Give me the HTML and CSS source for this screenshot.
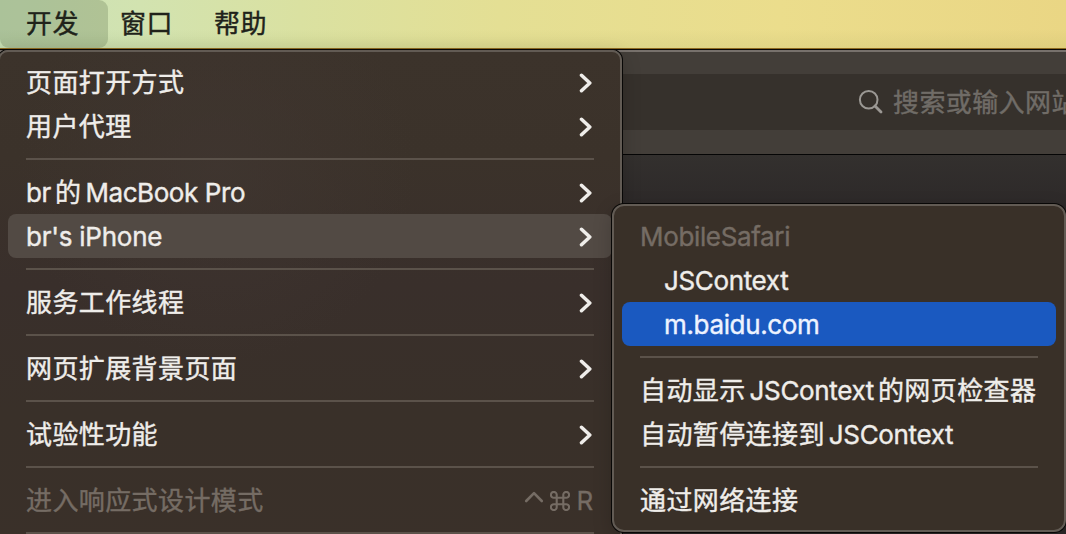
FILE: index.html
```html
<!DOCTYPE html>
<html lang="zh-CN">
<head>
<meta charset="utf-8">
<title>开发</title>
<link rel="stylesheet" href="styles.css">
</head>
<body>
<svg class="defs" width="0" height="0">
  <symbol id="chevron" viewBox="0 0 14 20"><path d="M2.5 2.3L10.8 10L2.5 17.7" fill="none" stroke="currentColor" stroke-width="3.5" stroke-linecap="round" stroke-linejoin="round"/></symbol>
</svg>
<div class="screen">
  <nav class="menubar">
    <span class="menubar-item active">开发</span>
    <span class="menubar-item window">窗口</span>
    <span class="menubar-item help">帮助</span>
  </nav>
  <main class="browser">
    <div class="toolbar">
      <div class="address">
        <svg class="search" width="26" height="26" viewBox="0 0 26 26" fill="none" stroke="#9b9894"><circle cx="10.7" cy="10.7" r="8.8" stroke-width="2"/><path d="M17 17L23 23" stroke-width="2.8" stroke-linecap="round"/></svg>
        <span class="placeholder">搜索或输入网站</span>
      </div>
    </div>
    <div class="page"></div>
  </main>

  <div class="menu main-menu">
    <div class="item"><span class="cjk">页面打开方式</span><svg class="chevron"><use href="#chevron"/></svg></div>
    <div class="item"><span class="cjk">用户代理</span><svg class="chevron"><use href="#chevron"/></svg></div>
    <div class="separator"></div>
    <div class="item"><span><span class="latin br">br</span>的<span class="latin mac">MacBook Pro</span></span><svg class="chevron"><use href="#chevron"/></svg></div>
    <div class="item open"><span class="latin phone">br's iPhone</span><svg class="chevron"><use href="#chevron"/></svg></div>
    <div class="separator"></div>
    <div class="item"><span class="cjk">服务工作线程</span><svg class="chevron"><use href="#chevron"/></svg></div>
    <div class="separator"></div>
    <div class="item"><span class="cjk">网页扩展背景页面</span><svg class="chevron"><use href="#chevron"/></svg></div>
    <div class="separator"></div>
    <div class="item"><span class="cjk">试验性功能</span><svg class="chevron"><use href="#chevron"/></svg></div>
    <div class="separator"></div>
    <div class="item disabled"><span class="cjk">进入响应式设计模式</span>
      <span class="shortcut">
        <svg width="20" height="24" viewBox="0 0 20 24"><path d="M2.2 13L10 5.2L17.8 13" fill="none" stroke="currentColor" stroke-width="2.6" stroke-linecap="round" stroke-linejoin="round"/></svg>
        <svg class="command" width="20" height="20" viewBox="0 0 20 20"><path d="M6.7 6.7H13.3V13.3H6.7ZM6.7 6.7V4A2.9 2.9 0 1 0 3.9 6.7H6.7M13.3 6.7H16.1A2.9 2.9 0 1 0 13.3 4V6.7M13.3 13.3V16A2.9 2.9 0 1 0 16.1 13.3H13.3M6.7 13.3H3.9A2.9 2.9 0 1 0 6.7 16V13.3" fill="none" stroke="currentColor" stroke-width="2.1"/></svg>
        <span class="latin key">R</span>
      </span>
    </div>
    <div class="separator"></div>
  </div>

  <div class="menu submenu">
    <div class="item disabled"><span class="latin safari">MobileSafari</span></div>
    <div class="item indent"><span class="latin context">JSContext</span></div>
    <div class="item indent selected"><span class="latin baidu">m.baidu.com</span></div>
    <div class="separator"></div>
    <div class="item"><span>自动显示<span class="latin context inline">JSContext</span>的网页检查器</span></div>
    <div class="item"><span>自动暂停连接到<span class="latin context inline">JSContext</span></span></div>
    <div class="separator"></div>
    <div class="item"><span class="cjk">通过网络连接</span></div>
  </div>
</div>
</body>
</html>
```
FILE: styles.css
```css
* { box-sizing: border-box; }
body { margin: 0; background: #302c2a; font-family: "Noto Sans CJK SC", sans-serif; font-size: 26px; letter-spacing: 0.4px; -webkit-text-stroke: 0.4px currentColor; }
.defs { display: block; }
.screen { position: relative; display: flex; flex-direction: column; width: 1066px; height: 534px; overflow: hidden; }
.menubar { display: flex; height: 49px; flex: none; color: #20221a; border-bottom: 1px solid #8e6b20;
  background: linear-gradient(180deg, rgba(60,80,20,0) 60%, rgba(60,80,20,.06) 100%), linear-gradient(90deg, #cae1b7 0, #d2e3b0 140px, #dae1a1 300px, #e4df94 500px, #ebdd8c 780px, #ead684 1066px); }
.menubar-item { height: 48px; line-height: 43px; white-space: nowrap; }
.menubar-item.active { width: 108px; padding-left: 26px; border-radius: 0 9px 9px 9px; background: rgba(70,90,55,.23); }
.window { margin-left: 12px; width: 94px; }
.browser { flex: 1; display: flex; flex-direction: column; border-top: 1px solid #080706; }
.toolbar { height: 105px; flex: none; padding-top: 22px; background: #433e39; border-top: 2px solid #77716c; border-bottom: 1px solid #050505; }
.address { display: flex; align-items: center; height: 56px; padding-left: 858px; background: #36312c; }
.search { flex: none; }
.placeholder { margin-left: 9px; color: #706c67; white-space: nowrap; line-height: 54px; height: 56px; }
.page { flex: 1; background: linear-gradient(#33302e, #2c2828 60px); }
.menu { position: absolute; display: flex; flex-direction: column; padding: 8px; border: 2px solid #625b54; border-radius: 12px; color: #efedea; background: #393028; box-shadow: 0 0 0 1px #080706, 0 6px 20px rgba(0,0,0,.2); }
.main-menu { left: -2px; top: 50px; width: 624px; height: 520px; border-radius: 10px;
  background: radial-gradient(ellipse at 35% 22%, rgba(64,54,49,.7), transparent 35%), linear-gradient(180deg, #3c332b 0, #3b322a 20%, #392f2b 45%, #393029 70%, #3a3029 100%); }
.submenu { left: 612px; top: 204px; width: 454px; height: 328px; }
.item { display: flex; align-items: center; justify-content: space-between; flex: none; height: 44px; padding: 0 18px; border-radius: 8px; line-height: 44px; white-space: nowrap; }
.main-menu .item { padding-right: 19px; }
.main-menu .item.open { background: #524a44; }
.item.indent { padding-left: 42px; }
.selected { background: #1a59c0; color: #eef3ff; }
.disabled { color: #756c64; }
.separator { flex: none; height: 22px; padding: 10px 18px; }
.separator::before { content: ""; display: block; height: 2px; background: #5b524a; }
.chevron { flex: none; width: 14px; height: 20px; margin-top: 2px; }
.cjk { padding-bottom: 2px; }
.latin { font-family: Inter, "Noto Sans CJK SC", sans-serif; font-weight: 400; font-size: 26px; letter-spacing: -0.35px; }
.item > .latin { padding-top: 2px; }
.phone { letter-spacing: -0.25px; }
.br { margin-right: 4px; }
.mac { margin-left: 4px; letter-spacing: -0.42px; }
.inline { margin: 0 4px 0 4px; }
.shortcut { display: flex; align-items: center; gap: 5px; -webkit-text-stroke-width: 0.3px; }
.command { margin-left: 1px; margin-top: 1px; }
.key { margin-left: 2px; padding-top: 2px; }
```
